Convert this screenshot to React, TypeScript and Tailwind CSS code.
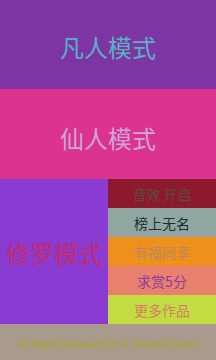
import React from "react";

const font = { fontFamily: '"Noto Sans CJK SC", "Noto Sans", sans-serif' };

export default function App() {
  const items = [
    { t: "音效 开启", bg: "bg-[#8c1a2c]", fg: "text-[#5a4a4a]" },
    { t: "榜上无名", bg: "bg-[#8fa7a0]", fg: "text-[#1e2a35]" },
    { t: "有福同享", bg: "bg-[#f0901c]", fg: "text-[#b88860]" },
    { t: "求赏5分", bg: "bg-[#e8806e]", fg: "text-[#8a3aa2]" },
    { t: "更多作品", bg: "bg-[#c2dc42]", fg: "text-[#d87c62]" },
  ];
  return (
    <div className="w-[216px] h-[360px] flex flex-col overflow-hidden" style={font}>
      <div className="h-[89px] bg-[#7e35a4] flex items-center justify-center pt-[5px]">
        <span className="text-[24px] text-[#5cb0c4] leading-none">凡人模式</span>
      </div>
      <div className="h-[90px] bg-[#dc3290] flex items-center justify-center pt-[7px]">
        <span className="text-[24px] text-[#cda6dc] leading-none">仙人模式</span>
      </div>
      <div className="h-[145px] flex">
        <div className="w-[108px] bg-[#8a3bd2] flex items-center justify-center pt-[2px]">
          <span className="text-[24px] text-[#c22a6c] leading-none">修罗模式</span>
        </div>
        <div className="flex-1 flex flex-col">
          {items.map((it) => (
            <div key={it.t} className={`h-[29px] flex items-center justify-center ${it.bg}`}>
              <span className={`text-[14px] leading-none ${it.fg}`}>{it.t}</span>
            </div>
          ))}
        </div>
      </div>
      <div className="flex-1 bg-[#a89b8c] flex items-center justify-center pt-[6px]">
        <span className="text-[10px] text-[#aaa42e] leading-none" style={{ fontFamily: '"Roboto", "Noto Sans", sans-serif' }}>
          All Rights Reserved 2014 VFGameStudio
        </span>
      </div>
    </div>
  );
}
